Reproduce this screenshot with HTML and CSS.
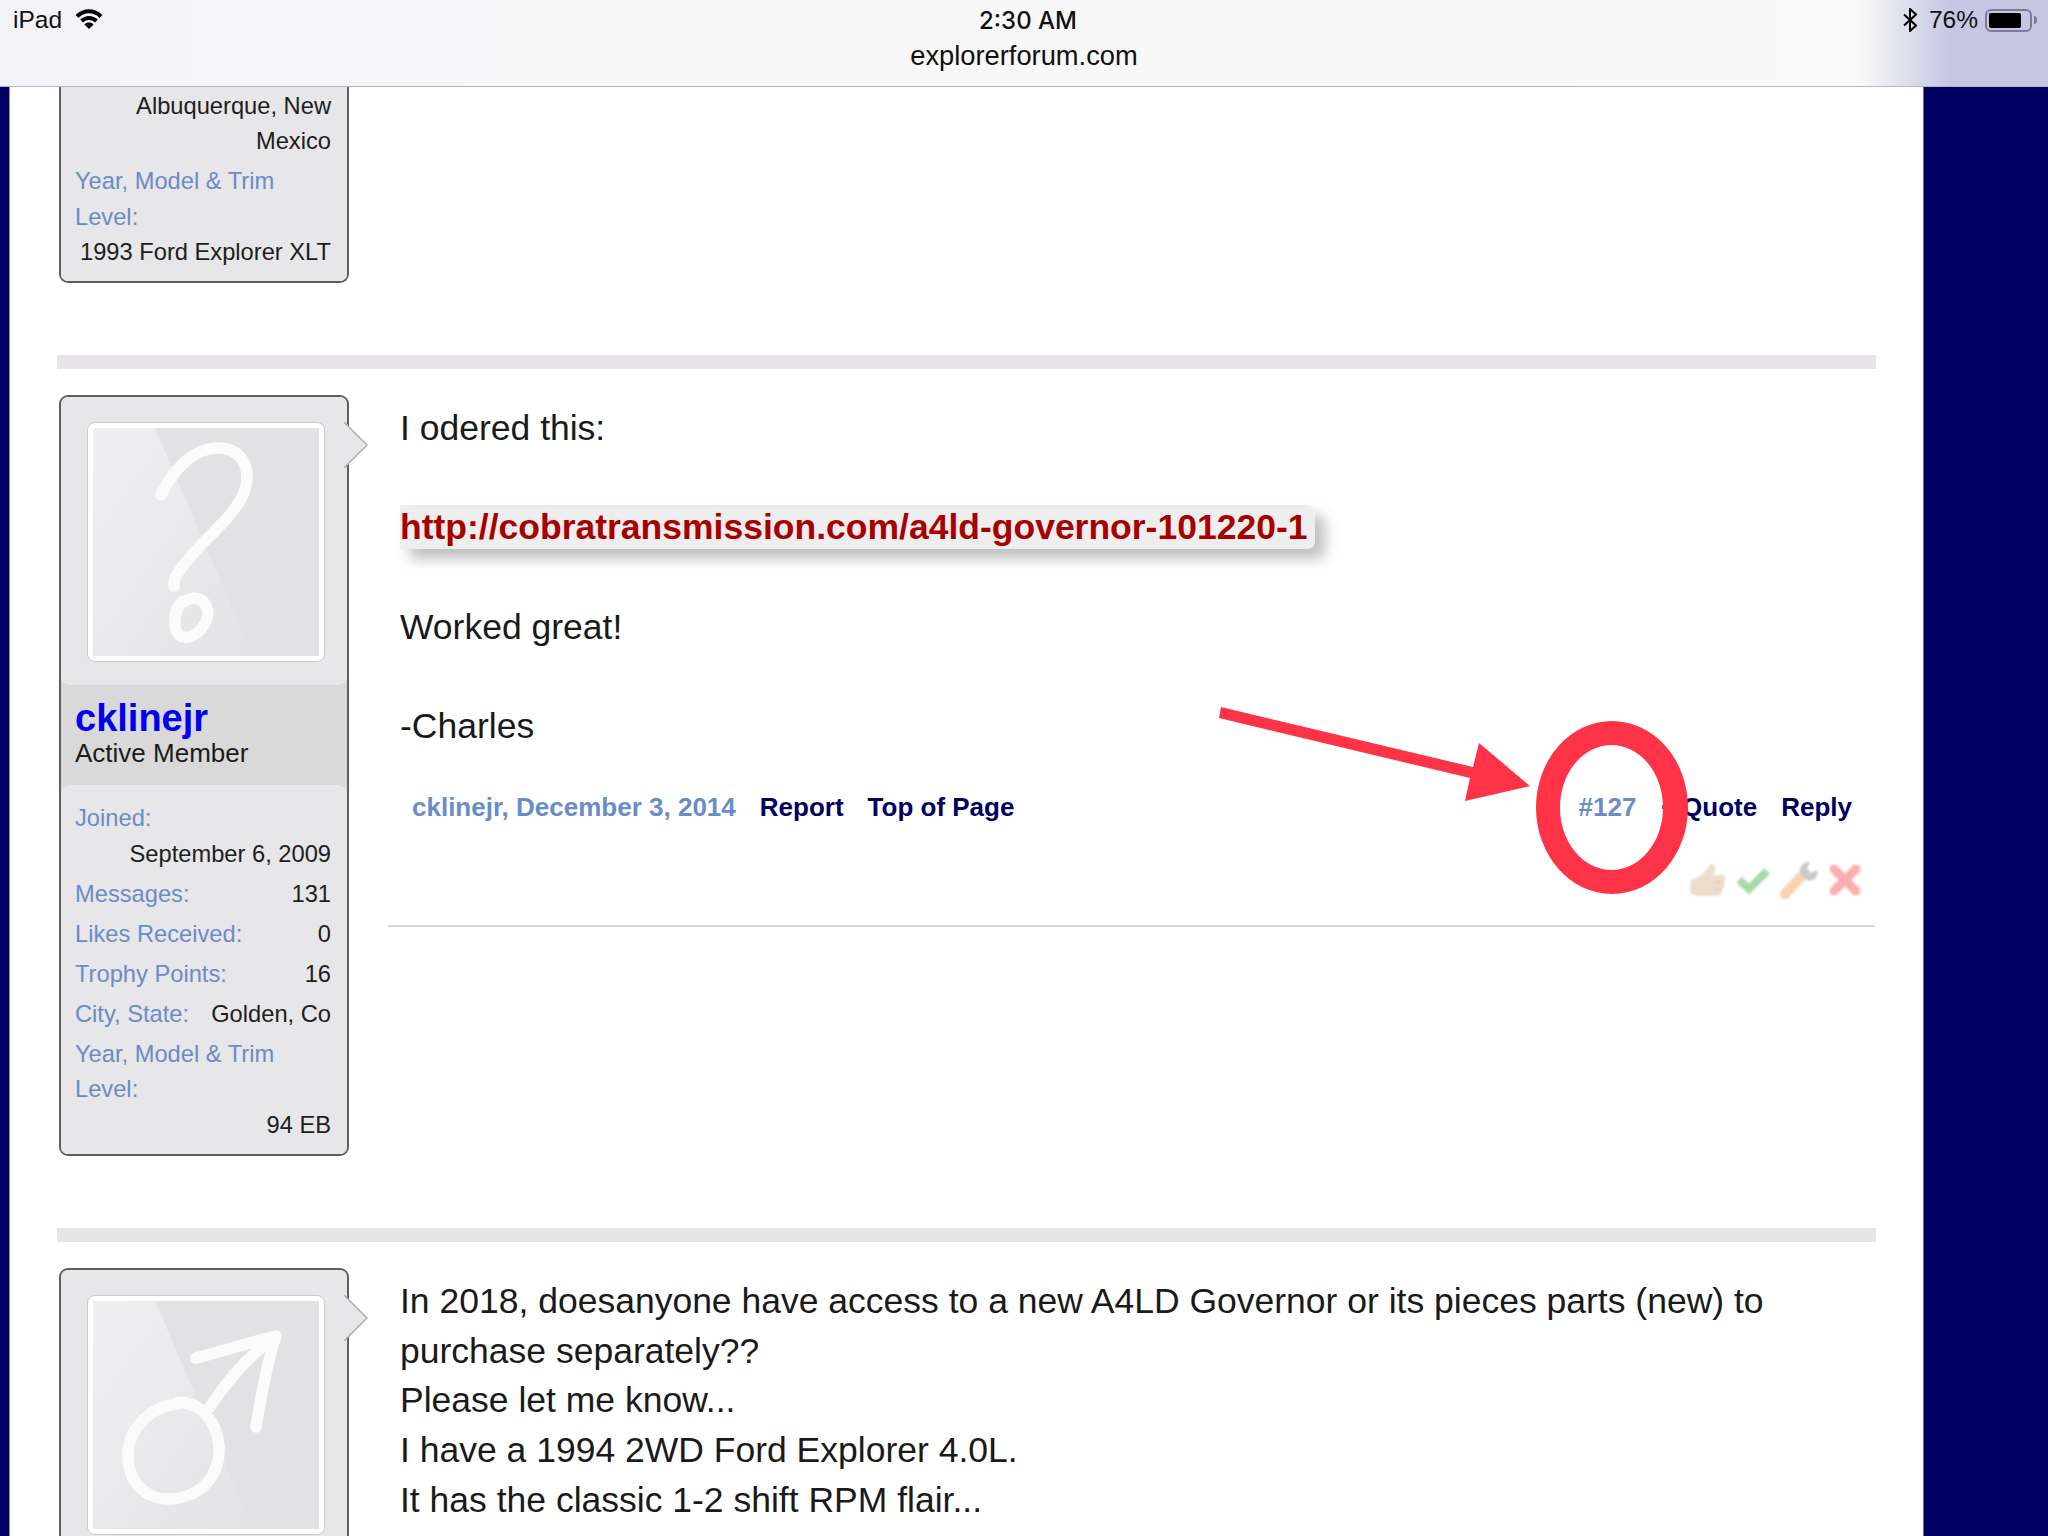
FILE: index.html
```html
<!DOCTYPE html>
<html lang="en">
<head>
<meta charset="utf-8">
<title>explorerforum.com</title>
<link rel="stylesheet" href="styles.css">
</head>
<body>
<header class="bar">
  <div class="status">
    <div class="status-left">
      <span>iPad</span>
      <svg class="wifi" viewBox="0 0 28 20"><path class="wifi-arc" d="M2 7.5C9 .5 19 .5 26 7.5M6.6 12C11 8 17 8 21.4 12"/><path d="M14 20l-4.600-4.600c2.600-2.400 6.600-2.400 9.200 0z"/></svg>
    </div>
    <div class="time">2:30 AM</div>
    <div class="status-right">
      <svg class="bt" viewBox="0 0 14 24"><path d="M1 6.500l12 11-6 5.500V1l6 5.500-12 11"/></svg>
      <span>76%</span>
      <div class="battery"><div class="battery-fill"></div></div>
      <div class="battery-tip"></div>
    </div>
  </div>
  <div class="url">explorerforum.com</div>
</header>

<div class="viewport">
  <main class="page">
    <section class="post post-clipped">
      <aside class="user user-clipped">
        <div class="details details-clipped">
          <div class="row"><span class="value">Albuquerque, New Mexico</span></div>
          <div class="row"><span class="label">Year, Model &amp; Trim Level:</span><span class="value">1993 Ford Explorer XLT</span></div>
        </div>
      </aside>
    </section>

    <div class="sep"></div>

    <section class="post">
      <aside class="user">
        <svg class="nub" viewBox="0 0 24 46"><path class="nub-fill" d="M0 0l23 23L0 46z"/><path class="nub-line" d="M0 0l23 23L0 46"/></svg>
        <div class="avatar-area">
          <div class="avatar">
            <svg viewBox="0 0 226 228">
              <defs><linearGradient id="g1" x1="0" y1="0" x2="1" y2="1"><stop offset="0" stop-color="#f0f0f2"/><stop offset="1" stop-color="#e3e3e5"/></linearGradient></defs>
              <rect class="av-bg" width="226" height="228"/>
              <path fill="url(#g1)" d="M0 0H62L160 228H0z"/>
              <path class="av-mark" d="M68 67C80 42 100 20 125 20C148 20 157 38 153 58C148 82 118 105 98 128C86 142 80 150 81 158M90 173C80 182 78 205 90 209C103 212 119 192 114 180C111 170 100 168 92 173"/>
            </svg>
          </div>
        </div>
        <div class="band">
          <div class="name">cklinejr</div>
          <div class="title">Active Member</div>
        </div>
        <div class="details">
          <div class="row"><span class="label">Joined:</span><span class="value">September 6, 2009</span></div>
          <div class="row"><span class="label">Messages:</span><span class="value">131</span></div>
          <div class="row"><span class="label">Likes Received:</span><span class="value">0</span></div>
          <div class="row"><span class="label">Trophy Points:</span><span class="value">16</span></div>
          <div class="row"><span class="label">City, State:</span><span class="value">Golden, Co</span></div>
          <div class="row"><span class="label">Year, Model &amp; Trim Level:</span><span class="value">94 EB</span></div>
        </div>
      </aside>
      <div class="content">
        <div class="message">I odered this:<br><br><a class="ext-link">http://cobratransmission.com/a4ld-governor-101220-1</a><br><br>Worked great!<br><br>-Charles</div>
        <div class="meta">
          <div class="meta-group">
            <span class="soft">cklinejr, December 3, 2014</span>
            <span class="dark">Report</span>
            <span class="dark">Top of Page</span>
          </div>
          <div class="meta-group">
            <span class="soft">#127</span>
            <span class="dark dot">·</span>
            <span class="dark">Quote</span>
            <span class="dark">Reply</span>
          </div>
        </div>
        <div class="reactions">
          <svg class="r-thumb" viewBox="0 0 36 34"><path class="thumb-body" d="M1 17C8 15 15 10 19 3C21-1 27 1 25 7L23 12H32C36 12 36 18 33 19C36 21 35 26 32 26C33 30 30 33 27 33H9C5 33 1 32 0 29z"/><path class="thumb-line" d="M25 19H33M25 26H32"/></svg>
          <svg class="r-check" viewBox="0 0 36 28"><path d="M4 14L14 23L32 5"/></svg>
          <svg class="r-wrench" viewBox="0 0 40 38"><path class="wr-handle" d="M5 33L21 16"/><path class="wr-head" d="M20 12C19 5 25 0 30 1L27 7L31 12L37 9C40 15 33 22 26 19z"/></svg>
          <svg class="r-x" viewBox="0 0 32 30"><path d="M5 4L27 26M27 4L5 26"/></svg>
        </div>
        <div class="rule"></div>
      </div>
    </section>

    <div class="sep"></div>

    <section class="post">
      <aside class="user">
        <svg class="nub" viewBox="0 0 24 46"><path class="nub-fill" d="M0 0l23 23L0 46z"/><path class="nub-line" d="M0 0l23 23L0 46"/></svg>
        <div class="avatar-area">
          <div class="avatar">
            <svg viewBox="0 0 226 228">
              <defs><linearGradient id="g2" x1="0" y1="0" x2="1" y2="1"><stop offset="0" stop-color="#f0f0f2"/><stop offset="1" stop-color="#e3e3e5"/></linearGradient></defs>
              <rect class="av-bg" width="226" height="228"/>
              <path fill="url(#g2)" d="M0 0H62L160 228H0z"/>
              <path class="av-mark" d="M84 103C60 105 36 125 35 152C34 180 52 199 78 198C110 196 128 172 126 145C124 122 110 102 85 101M117 106C135 78 155 55 181 37M103 57C130 50 155 42 183 35C174 62 168 95 163 126"/>
            </svg>
          </div>
        </div>
      </aside>
      <div class="content">
        <div class="message">In 2018, doesanyone have access to a new A4LD Governor or its pieces parts (new) to purchase separately??<br>Please let me know...<br>I have a 1994 2WD Ford Explorer 4.0L.<br>It has the classic 1-2 shift RPM flair...</div>
      </div>
    </section>
  </main>
</div>

<svg class="annotation" viewBox="0 0 2048 1536">
  <path d="M1221 707L1473 767L1479 743L1530 786L1465 801L1470 778L1219 718z"/>
  <path fill-rule="evenodd" d="M1536 807.500a76 86.500 0 1 0 152 0a76 86.500 0 1 0-152 0zM1560 807.500a51.500 62.500 0 1 0 103 0a51.500 62.500 0 1 0-103 0z"/>
</svg>
</body>
</html>
```
FILE: styles.css
```css
* { box-sizing: border-box; }
html, body { margin: 0; height: 100%; }
body {
  position: relative;
  width: 2048px;
  height: 1536px;
  overflow: hidden;
  display: flex;
  flex-direction: column;
  font-family: "Liberation Sans", Arial, sans-serif;
  color: #1c1c1c;
  background: #000060;
}

/* iOS chrome */
.bar {
  flex: none;
  height: 87px;
  border-bottom: 1px solid #b9b9bd;
  background: linear-gradient(90deg, #f2f2f7 0, #f6f6f8 200px, #f9f9f9 1860px, #c6c6e3 1950px, #c6c6e3 100%);
  color: #111;
}
.status {
  display: grid;
  grid-template-columns: 1fr auto 1fr;
  align-items: center;
  height: 40px;
  padding: 0 5px 0 13px;
  font-size: 24.500px;
}
.status-left { display: flex; align-items: center; gap: 13px; }
.wifi { width: 28px; height: 20px; margin-top: -3px; fill: #000; }
.wifi-arc { fill: none; stroke: #000; stroke-width: 4; }
.time { font-family: Inter, "Liberation Sans", sans-serif; font-weight: 500; font-size: 24px; }
.status-right { display: flex; align-items: center; justify-content: flex-end; gap: 7px; margin-right: 6px; }
.bt { width: 14px; height: 24px; fill: none; stroke: #000; stroke-width: 2; margin-right: 5px; }
.battery {
  width: 47px;
  height: 23px;
  border: 2px solid #7b7b9c;
  border-radius: 6px;
  padding: 2px;
}
.battery-fill { width: 32px; height: 100%; background: #000; border-radius: 2px; }
.battery-tip { width: 3px; height: 8px; margin-left: -5px; background: #7b7b9c; border-radius: 0 3px 3px 0; }
.url { text-align: center; font-size: 27.300px; line-height: 32px; }

/* page */
.viewport { flex: 1; min-height: 0; overflow: hidden; padding-left: 9px; }
.page {
  width: 1915px;
  min-height: 100%;
  padding: 0 48px 0 47px;
  background: #fff;
  border-left: 1px solid #8f8fc0;
  border-right: 1px solid #6c6c9c;
}
.sep { height: 14px; margin: 72px -1px 26px 0; background: #e7e5e7; }
.post { display: flex; align-items: flex-start; gap: 39px; padding-left: 2px; }

.user {
  position: relative;
  flex: none;
  width: 290px;
  border: 2px solid #5f5f5f;
  border-radius: 9px;
  background: #d9d9d9;
  box-shadow: inset 0 -2px 0 #f6f6f6;
}
.user-clipped { border-top: 0; border-radius: 0 0 9px 9px; background: #e7e6e8; }
.nub { position: absolute; top: 25px; right: -21px; width: 24px; height: 46px; }
.nub-fill { fill: #e7e6e8; }
.nub-line { fill: none; stroke: #adadad; stroke-width: 1.500; }
.avatar-area { padding: 25px 0 23px 26px; background: #e7e6e8; border-radius: 7px 7px 9px 9px; }
.avatar {
  width: 238px;
  height: 240px;
  padding: 5px;
  background: #fff;
  border: 1px solid #ccc;
  border-radius: 8px;
}
.avatar svg { display: block; width: 226px; height: 228px; }
.av-bg { fill: #e2e2e4; }
.av-mark { fill: none; stroke: #fbfbfb; stroke-width: 11.500; stroke-linecap: round; stroke-linejoin: round; }

.band { padding: 13px 14px 17px; }
.name { font-size: 38px; line-height: 40px; font-weight: 700; color: #0000ee; }
.title { font-size: 26px; line-height: 30px; }

.details { padding: 16px 16px 11px 14px; background: #e7e6e8; border-radius: 9px 9px 7px 7px; font-size: 23.700px; line-height: 35.500px; }
.details-clipped { padding-top: 1.500px; padding-bottom: 10.500px; border-radius: 0 0 7px 7px; }
.row { display: flex; flex-wrap: wrap; justify-content: space-between; margin-bottom: 4.500px; }
.row:last-child { margin-bottom: 0; }
.label { color: #6b8cc7; }
.value { margin-left: auto; text-align: right; color: #1e1e1e; }

.content { flex: 1; min-width: 0; padding-top: 9px; }
.message { padding-left: 12px; font-size: 35.500px; line-height: 49.700px; color: #1a1a1a; }
.ext-link {
  padding: 2px 8px 2px 0;
  font-weight: 700;
  color: #a80000;
  background: #eeeeee;
  border-radius: 0 8px 8px 0;
  box-shadow: 10px 10px 14px rgba(0, 0, 0, .25);
}
.meta {
  display: flex;
  justify-content: space-between;
  margin-top: 37px;
  padding: 0 23px 0 24px;
  font-size: 26px;
  line-height: 36px;
  font-weight: 700;
}
.meta-group { display: flex; gap: 24px; }
.dot { margin-right: -11px; }
.soft { color: #6b8cc7; }
.dark { color: #000060; }

.reactions { display: flex; justify-content: flex-end; align-items: center; gap: 9px; margin-top: 36px; padding-right: 14px; height: 38px; opacity: .45; filter: blur(.8px); }
.r-thumb { width: 36px; height: 34px; }
.thumb-body { fill: #d9b58b; }
.thumb-line { fill: none; stroke: #b58f62; stroke-width: 1.500; }
.r-check { width: 36px; height: 28px; fill: none; stroke: #3fae3f; stroke-width: 8; }
.r-wrench { width: 40px; height: 38px; }
.wr-handle { fill: none; stroke: #f29a4e; stroke-width: 10; stroke-linecap: round; }
.wr-head { fill: #8c8c8c; }
.r-x { width: 32px; height: 30px; fill: none; stroke: #ff4a55; stroke-width: 9; stroke-linecap: round; }
.rule { height: 2px; margin-top: 26px; background: #d8d8d8; }

.annotation { position: absolute; top: 0; left: 0; width: 2048px; height: 1536px; fill: #ff3347; pointer-events: none; }
```
